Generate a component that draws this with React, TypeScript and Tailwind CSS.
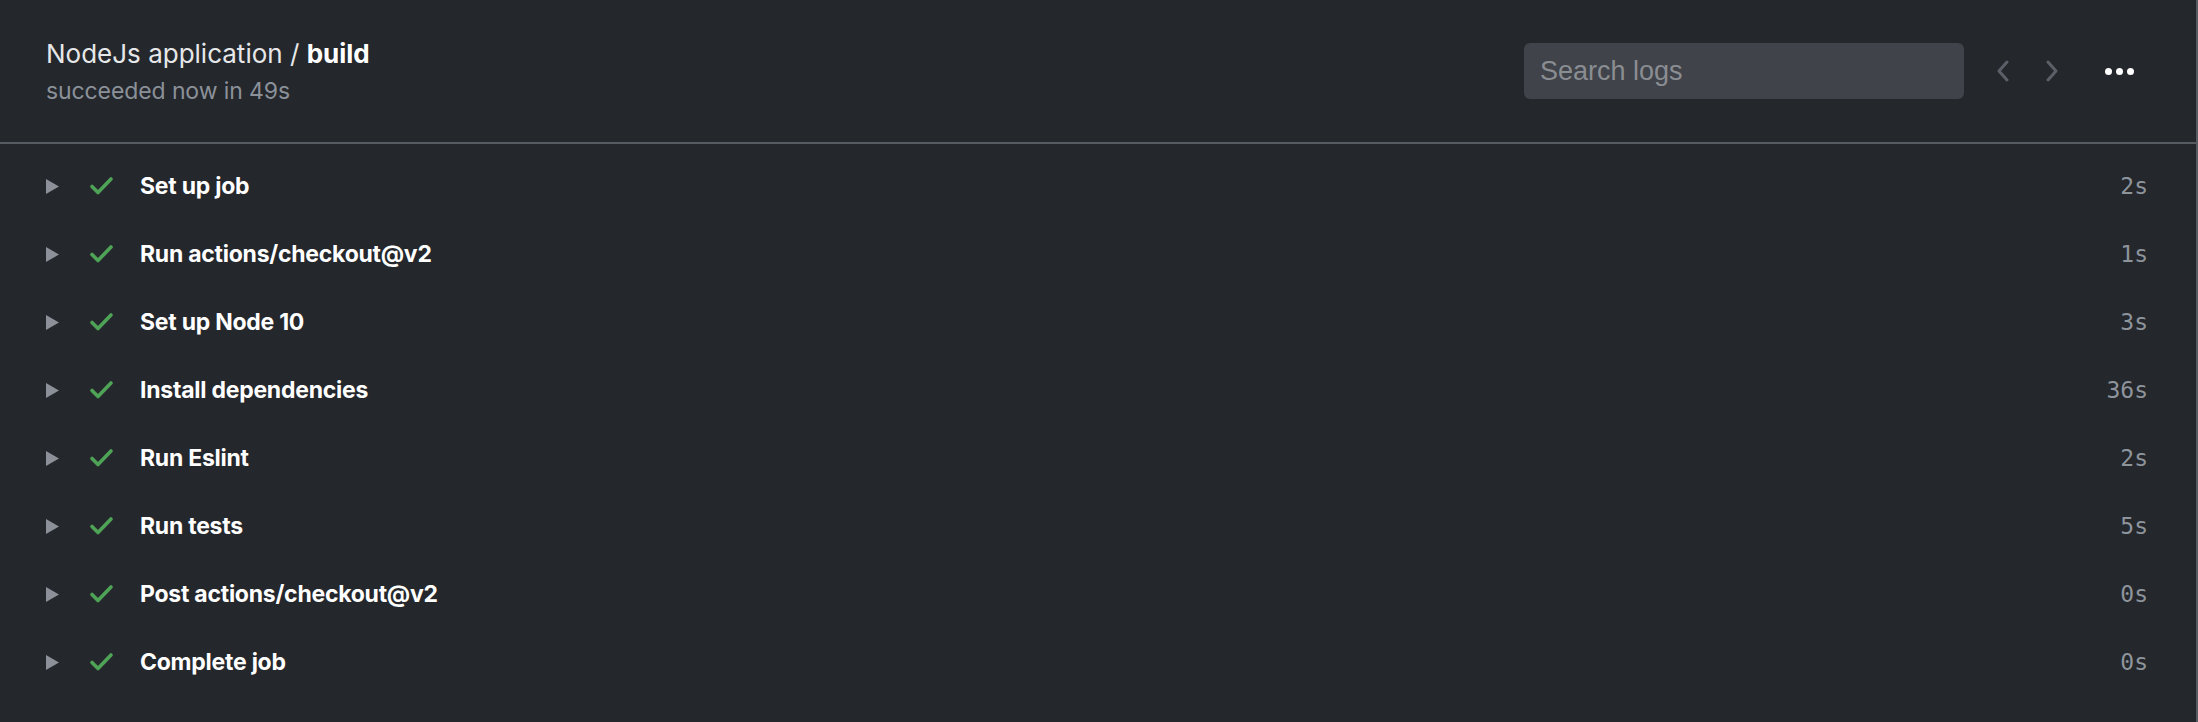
import React from 'react';

type Step = { name: string; duration: string };

const steps: Step[] = [
  { name: 'Set up job', duration: '2s' },
  { name: 'Run actions/checkout@v2', duration: '1s' },
  { name: 'Set up Node 10', duration: '3s' },
  { name: 'Install dependencies', duration: '36s' },
  { name: 'Run Eslint', duration: '2s' },
  { name: 'Run tests', duration: '5s' },
  { name: 'Post actions/checkout@v2', duration: '0s' },
  { name: 'Complete job', duration: '0s' },
];

const sans = { fontFamily: 'Inter, "Noto Sans", sans-serif' };

const Chevron = ({ dir }: { dir: 'left' | 'right' }) => (
  <svg width="14" height="22" viewBox="0 0 14 22" fill="none" stroke="#5b6068" strokeWidth={3} strokeLinecap="round" strokeLinejoin="round">
    {dir === 'left' ? <polyline points="11,2 3,11 11,20" /> : <polyline points="3,2 11,11 3,20" />}
  </svg>
);

const StepRow = ({ step }: { step: Step }) => (
  <div className="flex items-center h-[68px] pl-[46px] pr-[48px]">
    <svg width="13" height="15" viewBox="0 0 13 15" className="shrink-0">
      <polygon points="0,0 13,7.5 0,15" fill="#8b9099" />
    </svg>
    <svg width="26" height="22" viewBox="0 0 26 22" className="shrink-0 ml-[30px]" fill="none" stroke="#4fa357" strokeWidth={3.6} strokeLinecap="round" strokeLinejoin="round">
      <polyline points="3,11.5 9,17.5 22,4" />
    </svg>
    <span className="ml-[25px] text-[23px] tracking-[-0.25px] font-bold text-white leading-none" style={sans}>
      {step.name}
    </span>
    <span className="ml-auto text-[23px] text-[#8e949b]" style={{ fontFamily: '"DejaVu Sans Mono", monospace' }}>
      {step.duration}
    </span>
  </div>
);

export default function App() {
  return (
    <div className="w-[2198px] h-[722px] bg-[#24272c] border-r-2 border-[#565a61] overflow-hidden" style={sans}>
      {/* header */}
      <div className="h-[142px] flex items-center pl-[46px] pr-[62px] border-b-2 border-[#565a61] box-content">
        <div className="flex flex-col">
          <div className="text-[26px] leading-[34px] text-[#e6e7e9]">
            NodeJs application / <span className="font-bold text-white">build</span>
          </div>
          <div className="text-[23px] tracking-[-0.1px] leading-[30px] text-[#8b9199] mt-[5px]">succeeded now in 49s</div>
        </div>
        <div className="ml-auto flex items-center">
          <div className="w-[440px] h-[56px] rounded-md bg-[#404349] flex items-center px-4">
            <span className="text-[27px] text-[#8a8d92]" style={{ fontFamily: '"Liberation Sans", Arial, sans-serif' }}>
              Search logs
            </span>
          </div>
          <div className="ml-[32px] flex items-center gap-[35px]">
            <Chevron dir="left" />
            <Chevron dir="right" />
          </div>
          <div className="ml-[46px] flex items-center gap-[4px]">
            <span className="w-[7px] h-[7px] rounded-full bg-white" />
            <span className="w-[7px] h-[7px] rounded-full bg-white" />
            <span className="w-[7px] h-[7px] rounded-full bg-white" />
          </div>
        </div>
      </div>
      {/* steps */}
      <div className="pt-[8px]">
        {steps.map((s) => (
          <StepRow key={s.name} step={s} />
        ))}
      </div>
    </div>
  );
}
